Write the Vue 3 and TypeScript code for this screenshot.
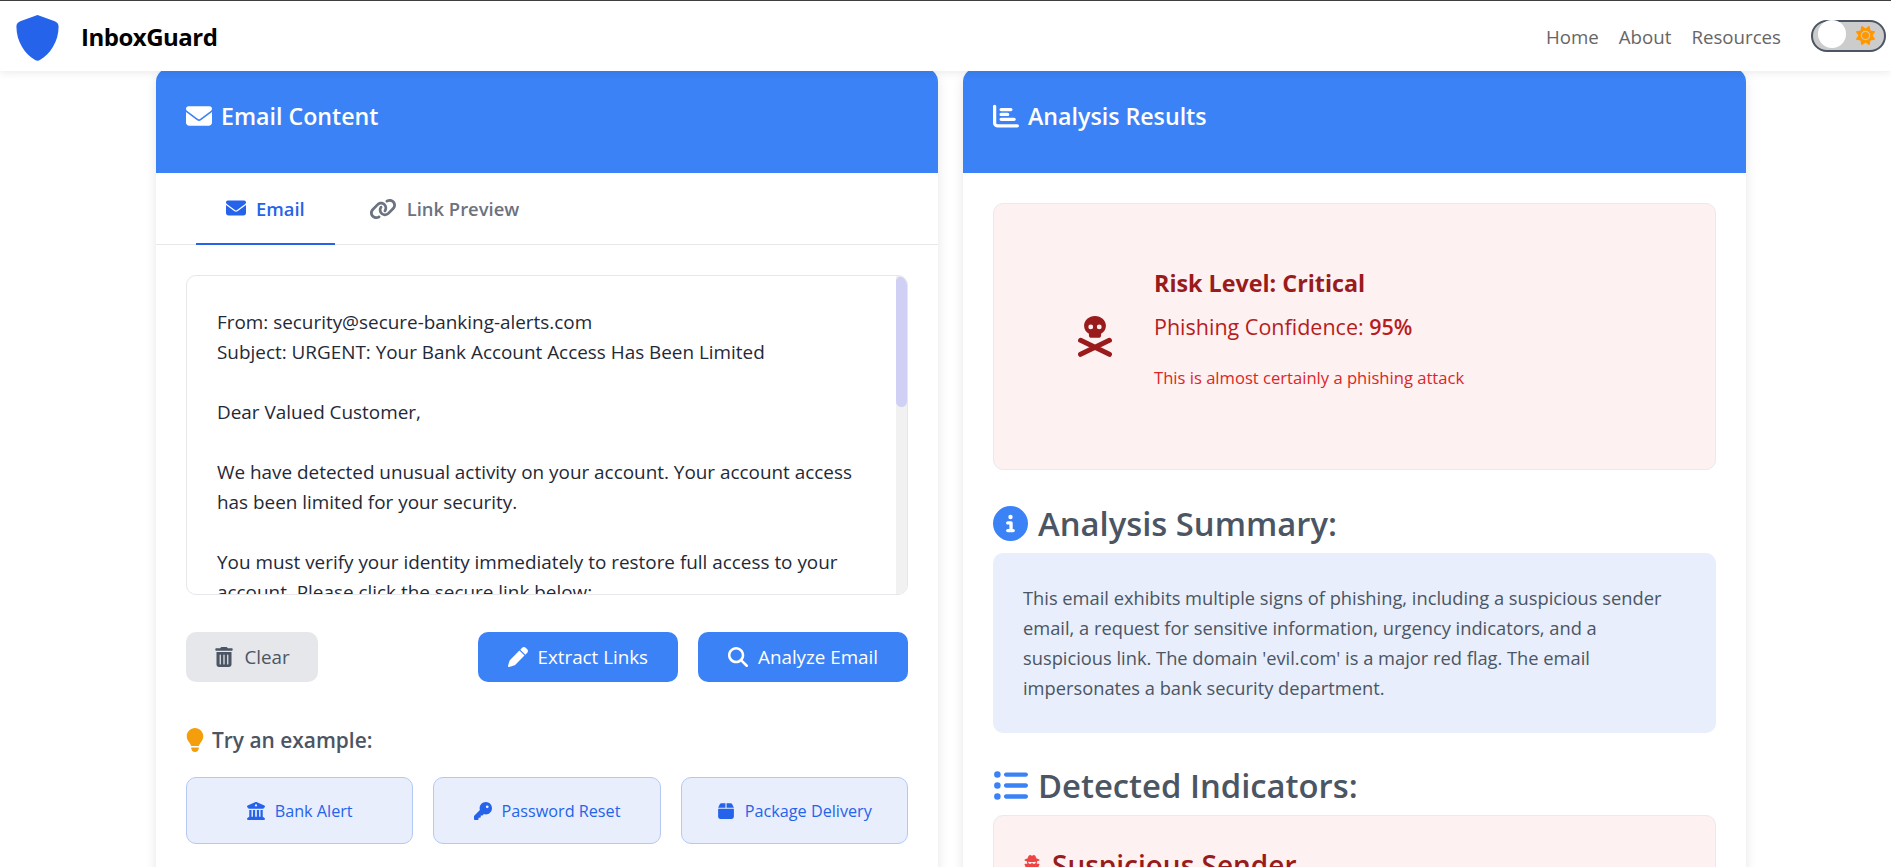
<template>
  <div class="page">
    <header class="navbar">
      <div class="brand">
        <svg class="brand__logo" viewBox="0 0 44 48"><path d="M22 0 L40 6.5 C42.5 7.5 44 9.5 44 12 C44 28 35 41 24.5 47 C23 48 21 48 19.5 47 C9 41 0 28 0 12 C0 9.5 1.5 7.5 4 6.5 Z" /></svg>
        <span class="brand__name">InboxGuard</span>
      </div>
      <nav class="nav-links">
        <a v-for="link in navLinks" :key="link">{{ link }}</a>
        <div class="theme-toggle">
          <span class="theme-toggle__knob"></span>
          <svg class="theme-toggle__sun" viewBox="0 0 512 512"><path :d="icons.sun" /></svg>
        </div>
      </nav>
    </header>

    <main class="columns">
      <section class="card">
        <div class="card__header">
          <h2>
            <svg class="icon" viewBox="0 0 512 512"><path :d="icons.envelope" /></svg>
            Email Content
          </h2>
        </div>
        <div class="tabs">
          <div class="tab tab--active">
            <svg class="icon" viewBox="0 0 512 512"><path :d="icons.envelope" /></svg>
            Email
          </div>
          <div class="tab tab--second">
            <svg class="icon icon--link" viewBox="0 0 640 512"><path :d="icons.link" /></svg>
            Link Preview
          </div>
        </div>
        <div class="card__body">
          <div class="editor">
            <div class="editor__text">
              <p v-for="(line, i) in emailLines" :key="i">{{ line || '\u00a0' }}</p>
            </div>
            <div class="editor__track"><span class="editor__thumb"></span></div>
          </div>
          <div class="actions">
            <button class="btn btn--muted">
              <svg class="icon" viewBox="0 0 448 512"><path :d="icons.trash" /></svg>
              Clear
            </button>
            <div class="actions__right">
              <button class="btn btn--primary">
                <svg class="icon" viewBox="0 0 512 512"><path :d="icons.pen" /></svg>
                Extract Links
              </button>
              <button class="btn btn--primary">
                <svg class="icon" viewBox="0 0 512 512"><path :d="icons.search" /></svg>
                Analyze Email
              </button>
            </div>
          </div>
          <h4 class="examples-title">
            <svg class="icon icon--bulb" viewBox="0 0 384 512"><path :d="icons.bulb" /></svg>
            Try an example:
          </h4>
          <div class="examples">
            <button v-for="ex in examples" :key="ex.label" class="example">
              <svg class="icon" :viewBox="ex.box"><path :d="ex.path" /></svg>
              {{ ex.label }}
            </button>
          </div>
        </div>
      </section>

      <section class="card">
        <div class="card__header">
          <h2>
            <svg class="icon" viewBox="0 0 512 512"><path :d="icons.chart" /></svg>
            Analysis Results
          </h2>
        </div>
        <div class="card__body card__body--results">
          <div class="risk">
            <svg class="risk__icon" viewBox="0 0 448 540">
              <path d="M368 128c0 44.4-25.4 83.5-64 106.4V256c0 17.7-14.3 32-32 32H176c-17.700 0-32-14.300-32-32V234.400c-38.600-23-64-62.100-64-106.400C80 57.300 144.500 0 224 0s144 57.300 144 128zM168 176a32 32 0 1 0 0-64 32 32 0 1 0 0 64zm144-32a32 32 0 1 0-64 0 32 32 0 1 0 64 0z" />
              <path class="risk__bones" d="M34 320 L414 505 M414 320 L34 505" />
            </svg>
            <div class="risk__text">
              <h3>Risk Level: Critical</h3>
              <p class="risk__score">Phishing Confidence: <strong>95%</strong></p>
              <p class="risk__note">This is almost certainly a phishing attack</p>
            </div>
          </div>

          <h3 class="section-title">
            <svg class="icon" viewBox="0 0 512 512"><path :d="icons.info" /></svg>
            Analysis Summary:
          </h3>
          <div class="summary">
            This email exhibits multiple signs of phishing, including a suspicious sender email, a request for sensitive information, urgency indicators, and a suspicious link. The domain 'evil.com' is a major red flag. The email impersonates a bank security department.
          </div>

          <h3 class="section-title section-title--second">
            <svg class="icon" viewBox="0 0 512 512"><path :d="icons.list" /></svg>
            Detected Indicators:
          </h3>
          <div class="indicator">
            <h4>
              <svg class="icon" viewBox="0 0 448 512"><path :d="icons.secret" /></svg>
              Suspicious Sender
            </h4>
          </div>
        </div>
      </section>
    </main>
  </div>
</template>

<script setup lang="ts">
const icons = {
  envelope:
    'M48 64C21.5 64 0 85.5 0 112c0 15.1 7.1 29.3 19.2 38.4L236.8 313.6c11.4 8.5 27 8.5 38.4 0L492.8 150.4c12.1-9.1 19.2-23.3 19.2-38.4c0-26.5-21.5-48-48-48H48zM0 176V384c0 35.3 28.7 64 64 64H448c35.3 0 64-28.7 64-64V176L294.4 339.2c-22.8 17.1-54 17.1-76.8 0L0 176z',
  link: 'M579.8 267.7c56.5-56.5 56.5-148 0-204.5c-50-50-128.8-56.5-186.3-15.4l-1.6 1.1c-14.4 10.3-17.7 30.3-7.4 44.6s30.3 17.7 44.6 7.4l1.6-1.1c32.1-22.9 76-19.3 103.8 8.6c31.5 31.5 31.5 82.5 0 114L422.3 334.8c-31.5 31.5-82.5 31.5-114 0c-27.9-27.9-31.5-71.8-8.6-103.8l1.1-1.6c10.3-14.4 6.9-34.4-7.4-44.6s-34.4-6.9-44.6 7.4l-1.1 1.6C206.5 251.2 213 330 263 380c56.5 56.5 148 56.5 204.5 0L579.8 267.7zM60.2 244.3c-56.5 56.5-56.5 148 0 204.5c50 50 128.8 56.5 186.3 15.4l1.6-1.1c14.4-10.3 17.7-30.3 7.4-44.6s-30.3-17.7-44.6-7.4l-1.6 1.1c-32.1 22.9-76 19.3-103.8-8.6C74 372 74 321 105.5 289.5L217.7 177.2c31.5-31.5 82.5-31.5 114 0c27.9 27.9 31.5 71.8 8.6 103.9l-1.1 1.6c-10.3 14.4-6.9 34.4 7.4 44.6s34.4 6.9 44.6-7.4l1.1-1.6C433.5 260.8 427 182 377 132c-56.5-56.5-148-56.5-204.5 0L60.2 244.3z',
  chart:
    'M32 32c17.7 0 32 14.3 32 32V400c0 8.8 7.2 16 16 16H480c17.7 0 32 14.3 32 32s-14.3 32-32 32H80c-44.2 0-80-35.8-80-80V64C0 46.3 14.3 32 32 32zm96 96c0-17.7 14.3-32 32-32l192 0c17.7 0 32 14.3 32 32s-14.3 32-32 32l-192 0c-17.7 0-32-14.3-32-32zm32 64H288c17.7 0 32 14.3 32 32s-14.3 32-32 32H160c-17.7 0-32-14.3-32-32s14.3-32 32-32zm0 96H416c17.7 0 32 14.3 32 32s-14.3 32-32 32H160c-17.7 0-32-14.3-32-32s14.3-32 32-32z',
  search:
    'M416 208c0 45.9-14.9 88.3-40 122.7L502.6 457.4c12.5 12.5 12.5 32.8 0 45.3s-32.8 12.5-45.3 0L330.7 376c-34.4 25.2-76.8 40-122.7 40C93.1 416 0 322.9 0 208S93.1 0 208 0S416 93.1 416 208zM208 352a144 144 0 1 0 0-288 144 144 0 1 0 0 288z',
  trash:
    'M135.2 17.7C140.6 6.8 151.7 0 163.8 0H284.2c12.1 0 23.2 6.8 28.6 17.7L320 32h96c17.7 0 32 14.3 32 32s-14.3 32-32 32H32C14.3 96 0 81.7 0 64S14.3 32 32 32h96l7.2-14.3zM32 128H416V448c0 35.3-28.7 64-64 64H96c-35.3 0-64-28.7-64-64V128zm96 64c-8.8 0-16 7.2-16 16V432c0 8.8 7.2 16 16 16s16-7.2 16-16V208c0-8.8-7.2-16-16-16zm96 0c-8.8 0-16 7.2-16 16V432c0 8.8 7.2 16 16 16s16-7.2 16-16V208c0-8.8-7.2-16-16-16zm96 0c-8.8 0-16 7.2-16 16V432c0 8.8 7.2 16 16 16s16-7.2 16-16V208c0-8.8-7.2-16-16-16z',
  pen: 'M362.7 19.3L314.3 67.7 444.3 197.7l48.4-48.4c25-25 25-65.5 0-90.5L453.3 19.3c-25-25-65.5-25-90.5 0zm-71 71L58.6 323.5c-10.4 10.4-18 23.3-22.2 37.4L1 481.2C-1.5 489.7 .8 498.8 7 505s15.3 8.5 23.7 6.1l120.3-35.4c14.1-4.2 27-11.8 37.4-22.2L421.7 220.3 291.7 90.3z',
  bulb: 'M272 384c9.6-31.9 29.5-59.1 49.2-86.2l0 0c5.2-7.1 10.4-14.2 15.4-21.4c19.8-28.5 31.4-63 31.4-100.3C368 78.8 289.2 0 192 0S16 78.8 16 176c0 37.3 11.6 71.9 31.4 100.3c5 7.2 10.2 14.3 15.4 21.4l0 0c19.8 27.1 39.7 54.4 49.2 86.2H272zM192 512c44.2 0 80-35.8 80-80V416H112v16c0 44.2 35.8 80 80 80z',
  info: 'M256 512A256 256 0 1 0 256 0a256 256 0 1 0 0 512zM216 336h24V272H216c-13.3 0-24-10.7-24-24s10.7-24 24-24h48c13.3 0 24 10.7 24 24v88h8c13.3 0 24 10.7 24 24s-10.7 24-24 24H216c-13.3 0-24-10.7-24-24s10.7-24 24-24zm40-208a32 32 0 1 1 0 64 32 32 0 1 1 0-64z',
  list: 'M64 144a48 48 0 1 0 0-96 48 48 0 1 0 0 96zM192 64c-17.7 0-32 14.3-32 32s14.3 32 32 32H480c17.7 0 32-14.3 32-32s-14.3-32-32-32H192zm0 160c-17.7 0-32 14.3-32 32s14.3 32 32 32H480c17.7 0 32-14.3 32-32s-14.3-32-32-32H192zm0 160c-17.7 0-32 14.3-32 32s14.3 32 32 32H480c17.7 0 32-14.3 32-32s-14.3-32-32-32H192zM64 464a48 48 0 1 0 0-96 48 48 0 1 0 0 96zm48-208a48 48 0 1 0 -96 0 48 48 0 1 0 96 0z',
  sun: 'M361.5 1.2c5 2.1 8.6 6.6 9.6 11.900L391 121l107.900 19.800c5.300 1 9.800 4.600 11.900 9.600s1.500 10.700-1.600 15.200L446.900 256l62.300 90.300c3.100 4.500 3.700 10.200 1.600 15.200s-6.600 8.600-11.900 9.600L391 391 371.100 498.900c-1 5.300-4.600 9.800-9.600 11.900s-10.700 1.500-15.200-1.600L256 446.900l-90.300 62.300c-4.500 3.100-10.200 3.700-15.200 1.600s-8.600-6.600-9.600-11.900L121 391 13.100 371.100c-5.300-1-9.800-4.600-11.900-9.600s-1.500-10.700 1.600-15.200L65.100 256 2.800 165.700c-3.100-4.500-3.700-10.200-1.600-15.200s6.600-8.600 11.900-9.600L121 121 140.900 13.100c1-5.300 4.600-9.800 9.600-11.900s10.700-1.500 15.200 1.600L256 65.100 346.300 2.800c4.500-3.100 10.200-3.700 15.200-1.600zM160 256a96 96 0 1 1 192 0 96 96 0 1 1 -192 0zm224 0a128 128 0 1 0 -256 0 128 128 0 1 0 256 0z',
  secret:
    'M224 16c-6.7 0-10.8-2.8-15.5-6.1C201.9 5.4 194 0 176 0c-30.5 0-52 43.7-66 89.4C62.7 98.1 32 112.2 32 128c0 14.3 25 27.1 64.6 35.9c-.4 4-.6 8-.6 12.1c0 17 3.3 33.2 9.3 48H45.4C38 224 32 230 32 237.4c0 1.7 .3 3.4 1 5l38.8 96.9C28.2 371.8 0 423.8 0 482.3C0 498.7 13.3 512 29.7 512H418.3c16.4 0 29.7-13.3 29.7-29.7c0-58.5-28.2-110.4-71.7-143L415 242.4c.6-1.6 1-3.3 1-5c0-7.4-6-13.4-13.4-13.4H342.7c6-14.8 9.3-31 9.3-48c0-4.1-.2-8.1-.6-12.1C391 155.1 416 142.3 416 128c0-15.8-30.7-29.9-78-38.6C324 43.7 302.5 0 272 0c-18 0-25.9 5.4-32.5 9.9c-4.8 3.3-8.8 6.1-15.5 6.1zm56 208H267.6c-16.5 0-31.1-10.6-36.3-26.2c-2.3-7-12.2-7-14.5 0c-5.2 15.6-19.9 26.2-36.3 26.2H168c-22.1 0-40-17.9-40-40V169.6c28.2 4.1 61 6.4 96 6.4s67.8-2.3 96-6.4V184c0 22.1-17.9 40-40 40z',
};

const navLinks = ['Home', 'About', 'Resources'];

const examples = [
  {
    label: 'Bank Alert',
    box: '0 0 512 512',
    path: 'M243.4 2.6l-224 96c-14 6-21.8 21-18.7 35.8S16.8 160 32 160v8c0 13.3 10.7 24 24 24H456c13.3 0 24-10.7 24-24v-8c15.2 0 28.3-10.7 31.3-25.6s-4.8-29.9-18.7-35.8l-224-96c-8-3.4-17.2-3.4-25.2 0zM128 224H64V420.3c-.6 .3-1.2 .7-1.8 1.1l-48 32c-11.7 7.8-17 22.4-12.9 35.9S17.9 512 32 512H480c14.1 0 26.5-9.2 30.6-22.7s-1.1-28.1-12.9-35.9l-48-32c-.6-.4-1.2-.7-1.8-1.1V224H384V416H344V224H280V416H232V224H168V416H128V224zM256 64a32 32 0 1 1 0 64 32 32 0 1 1 0-64z',
  },
  {
    label: 'Password Reset',
    box: '0 0 512 512',
    path: 'M336 352c97.2 0 176-78.8 176-176S433.2 0 336 0S160 78.8 160 176c0 18.7 2.9 36.8 8.3 53.7L7 391c-4.5 4.5-7 10.6-7 17v80c0 13.3 10.7 24 24 24h80c13.3 0 24-10.7 24-24V448h40c13.3 0 24-10.7 24-24V384h40c6.4 0 12.5-2.5 17-7l33.3-33.3c16.9 5.4 35 8.3 53.7 8.3zM376 96a40 40 0 1 1 0 80 40 40 0 1 1 0-80z',
  },
  {
    label: 'Package Delivery',
    box: '0 0 448 512',
    path: 'M50.7 58.5L0 160H208V32H93.7C75.5 32 58.9 42.3 50.7 58.5zM240 160H448L397.3 58.5C389.1 42.3 372.5 32 354.3 32H240V160zm208 32H0V416c0 35.3 28.7 64 64 64H384c35.3 0 64-28.7 64-64V192z',
  },
];

const emailLines = [
  'From: security@secure-banking-alerts.com',
  'Subject: URGENT: Your Bank Account Access Has Been Limited',
  '',
  'Dear Valued Customer,',
  '',
  'We have detected unusual activity on your account. Your account access',
  'has been limited for your security.',
  '',
  'You must verify your identity immediately to restore full access to your',
  'account. Please click the secure link below:',
];
</script>

<style>
html,
body {
  margin: 0;
  overflow: hidden;
  background: #fff;
}
</style>

<style scoped>
.page {
  height: 867px;
  overflow: hidden;
  font-family: 'Open Sans', 'Noto Sans', sans-serif;
  color: #1f2937;
  background: #fff;
}

.icon {
  fill: currentColor;
  flex: none;
}

/* nav */
.navbar {
  position: relative;
  z-index: 5;
  box-sizing: border-box;
  height: 71px;
  display: flex;
  align-items: center;
  justify-content: space-between;
  padding: 0 5px 0 16px;
  background: #fff;
  border-top: 1px solid #3f3f3f;
  box-shadow: 0 2px 8px rgba(0, 0, 0, 0.08);
}

.brand {
  display: flex;
  align-items: center;
  gap: 22px;
}

.brand__logo {
  width: 43px;
  height: 46px;
  fill: #2563eb;
  margin-top: 3px;
}

.brand__name {
  font-size: 24px;
  font-weight: 700;
  letter-spacing: -0.5px;
  color: #000;
}

.nav-links {
  display: flex;
  align-items: center;
  gap: 20px;
  font-size: 18.7px;
  color: #666;
}

.theme-toggle {
  box-sizing: border-box;
  position: relative;
  width: 75px;
  height: 32px;
  margin-left: 10px;
  border: 2px solid #4b5563;
  border-radius: 16px;
  background: #ccc;
}

.theme-toggle__knob {
  position: absolute;
  left: 5px;
  top: -2px;
  width: 28px;
  height: 28px;
  border-radius: 50%;
  background: #fff;
}

.theme-toggle__sun {
  position: absolute;
  right: 9px;
  top: 4px;
  width: 19px;
  height: 19px;
  fill: #ff9800;
}

/* columns */
.columns {
  display: grid;
  grid-template-columns: 782px 783px;
  gap: 25px;
  margin: -3px 0 0 156px;
}

.card {
  background: #fff;
  border-radius: 14px;
  box-shadow: 0 4px 12px rgba(0, 0, 0, 0.1);
  overflow: hidden;
  height: 900px;
}

.card__header {
  box-sizing: border-box;
  height: 105px;
  padding: 33px 30px 0;
  background: #3b82f6;
  color: #fff;
}

.card__header h2 {
  display: flex;
  align-items: center;
  gap: 9px;
  margin: 0;
  font-size: 23.2px;
  line-height: 30px;
  font-weight: 600;
}

.card__header .icon {
  width: 26px;
  height: 26px;
}

/* tabs */
.tabs {
  display: flex;
  height: 72px;
  padding-left: 40px;
  border-bottom: 1px solid #e5e7eb;
  box-sizing: border-box;
}

.tab {
  display: flex;
  align-items: center;
  gap: 10px;
  padding: 0 30px;
  font-size: 18.4px;
  font-weight: 600;
  color: #6b7280;
}

.tab .icon {
  width: 20px;
  height: 20px;
}

.tab--second {
  margin-left: 4px;
}

.tab .icon--link {
  width: 28px;
  height: 22px;
}

.tab--active {
  color: #2563eb;
  border-bottom: 2px solid #2563eb;
  margin-bottom: -1px;
}

.card__body {
  padding: 30px;
}

/* editor */
.editor {
  box-sizing: border-box;
  position: relative;
  height: 320px;
  overflow: hidden;
  border: 1px solid #e5e7eb;
  border-radius: 10px;
}

.editor__text {
  padding: 31px 30px;
  font-size: 18.9px;
  line-height: 30px;
  color: #1f2937;
  white-space: nowrap;
}

.editor p {
  margin: 0;
}

.editor__track {
  position: absolute;
  top: 0;
  right: 0;
  bottom: 0;
  width: 11px;
  background: #f1f1f1;
}

.editor__thumb {
  display: block;
  height: 131px;
  background: #d0d0f5;
  border-radius: 6px;
}

/* buttons */
.actions {
  display: flex;
  justify-content: space-between;
  margin-top: 37px;
}

.actions__right {
  display: flex;
  gap: 20px;
}

.btn {
  display: flex;
  align-items: center;
  justify-content: center;
  gap: 10px;
  height: 50px;
  border: none;
  border-radius: 10px;
  font-family: inherit;
  font-size: 18.8px;
}

.btn .icon {
  width: 20px;
  height: 20px;
}

.btn--muted {
  width: 132px;
  background: #e5e7eb;
  color: #4b5563;
}

.btn--primary {
  background: #3b82f6;
  color: #fff;
  padding: 0 30px;
}

.examples-title {
  display: flex;
  align-items: center;
  gap: 8px;
  margin: 41px 0 0;
  height: 34px;
  font-size: 20.9px;
  font-weight: 600;
  color: #4b5563;
}

.icon--bulb {
  width: 18px;
  height: 24px;
  color: #f59e0b;
}

.examples {
  display: grid;
  grid-template-columns: repeat(3, 1fr);
  gap: 20px;
  margin-top: 20px;
}

.example {
  display: flex;
  align-items: center;
  justify-content: center;
  gap: 10px;
  height: 67px;
  padding-top: 2px;
  border: 1px solid #b4c8f6;
  border-radius: 10px;
  background: #e8eefc;
  color: #2563eb;
  font-family: inherit;
  font-size: 16.2px;
}

.example .icon {
  width: 18px;
  height: 18px;
}

/* results */
.risk {
  box-sizing: border-box;
  height: 267px;
  display: flex;
  align-items: center;
  padding-left: 84px;
  background: #fdf1f2;
  border: 1px solid #e9e9ee;
  border-radius: 10px;
}

.risk__icon {
  width: 34px;
  height: 41px;
  fill: #991b1b;
  margin-right: 42px;
}

.risk__bones {
  fill: none;
  stroke: #991b1b;
  stroke-width: 66px;
  stroke-linecap: round;
}

.risk__text {
  margin-top: -14px;
}

.risk__text h3 {
  margin: 0;
  font-size: 23.3px;
  line-height: 32px;
  font-weight: 700;
  color: #991b1b;
}

.risk__score {
  margin: 12px 0 0;
  font-size: 21.5px;
  line-height: 32px;
  color: #b91c1c;
}

.risk__score strong {
  font-weight: 600;
}

.risk__note {
  margin: 20px 0 0;
  font-size: 16.6px;
  line-height: 30px;
  color: #dc2626;
}

.section-title {
  display: flex;
  align-items: center;
  gap: 10px;
  margin: 23px 0 0;
  height: 60px;
  font-size: 32.8px;
  font-weight: 600;
  color: #4b5563;
  line-height: 53px;
}

.section-title .icon {
  width: 35px;
  height: 35px;
  color: #3b82f6;
}

.section-title--second {
  margin-top: 22px;
}

.summary {
  padding: 30px;
  border-radius: 10px;
  background: #e8eefb;
  font-size: 18.3px;
  line-height: 30px;
  color: #4b5563;
}

.indicator {
  margin-top: 0;
  padding: 30px 28px;
  background: #fdf1f2;
  border: 1px solid #e9e9ee;
  border-radius: 10px;
}

.indicator h4 {
  display: flex;
  align-items: center;
  gap: 10px;
  margin: 0;
  font-size: 28px;
  font-weight: 600;
  color: #991b1b;
}

.indicator .icon {
  width: 20px;
  height: 20px;
  color: #ef4444;
}
</style>
